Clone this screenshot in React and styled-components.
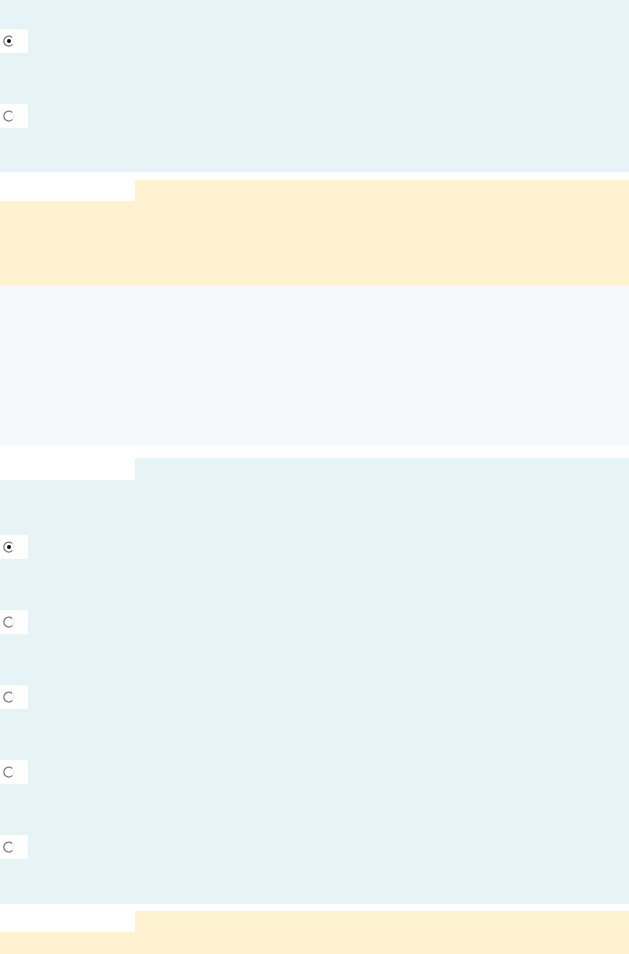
import styled, { createGlobalStyle } from 'styled-components';

const GlobalStyle = createGlobalStyle`
  html, body {
    margin: 0;
    padding: 0;
    background: #fff;
    font-family: 'Liberation Sans', Arial, sans-serif;
  }
`;

const colors = {
  blue: '#e6f4f6',
  yellow: '#fff2d1',
  gray: '#f6f8fa',
};

const Page = styled.main`
  display: flex;
  flex-direction: column;
  width: 100%;
  min-height: 954px;
  background: #fff;
`;

const Section = styled.section`
  display: flex;
  flex-direction: column;
  margin-top: ${({ gap }) => gap || 0}px;
`;

const TabRow = styled.div`
  display: flex;
  height: ${({ height }) => height || 21}px;
`;

const Tab = styled.div`
  width: 135px;
  background: #fff;
  flex-shrink: 0;
`;

const TabFill = styled.div`
  flex: 1;
  background: ${({ tone }) => colors[tone]};
`;

const Body = styled.div`
  display: flex;
  flex-direction: column;
  gap: 51px;
  background: ${({ tone }) => colors[tone]};
  height: ${({ height }) => height}px;
  padding-top: ${({ top }) => top || 0}px;
  box-sizing: border-box;
`;

const RadioBox = styled.label`
  display: flex;
  align-items: center;
  width: 28px;
  height: 24px;
  padding-left: 3px;
  box-sizing: border-box;
  background: #fff;
  cursor: pointer;
`;

function Radio({ checked }) {
  return (
    <RadioBox>
      <svg width="12" height="12" viewBox="0 0 12 12">
        <path d="M9.2 2.4 A5 5 0 1 0 9.6 9.4" fill="none" stroke="#7d7d7d" strokeWidth="1.3" />
        <path d="M9.6 9.4 A5 5 0 0 0 9.2 2.4" fill="none" stroke="#eeeeee" strokeWidth="1.2" />
        {checked && <circle cx="6" cy="6" r="2" fill="#111" />}
      </svg>
    </RadioBox>
  );
}

function App() {
  return (
    <Page>
      <GlobalStyle />
      <Section>
        <Body tone="blue" height={172} top={29}>
          <Radio checked />
          <Radio />
        </Body>
      </Section>

      <Section gap={8}>
        <TabRow>
          <Tab />
          <TabFill tone="yellow" />
        </TabRow>
        <Body tone="yellow" height={85} />
      </Section>

      <Section>
        <Body tone="gray" height={160} />
      </Section>

      <Section gap={12}>
        <TabRow height={22}>
          <Tab />
          <TabFill tone="blue" />
        </TabRow>
        <Body tone="blue" height={424} top={55}>
          <Radio checked />
          <Radio />
          <Radio />
          <Radio />
          <Radio />
        </Body>
      </Section>

      <Section gap={7}>
        <TabRow>
          <Tab />
          <TabFill tone="yellow" />
        </TabRow>
        <Body tone="yellow" height={40} />
      </Section>
    </Page>
  );
}

export default App;
